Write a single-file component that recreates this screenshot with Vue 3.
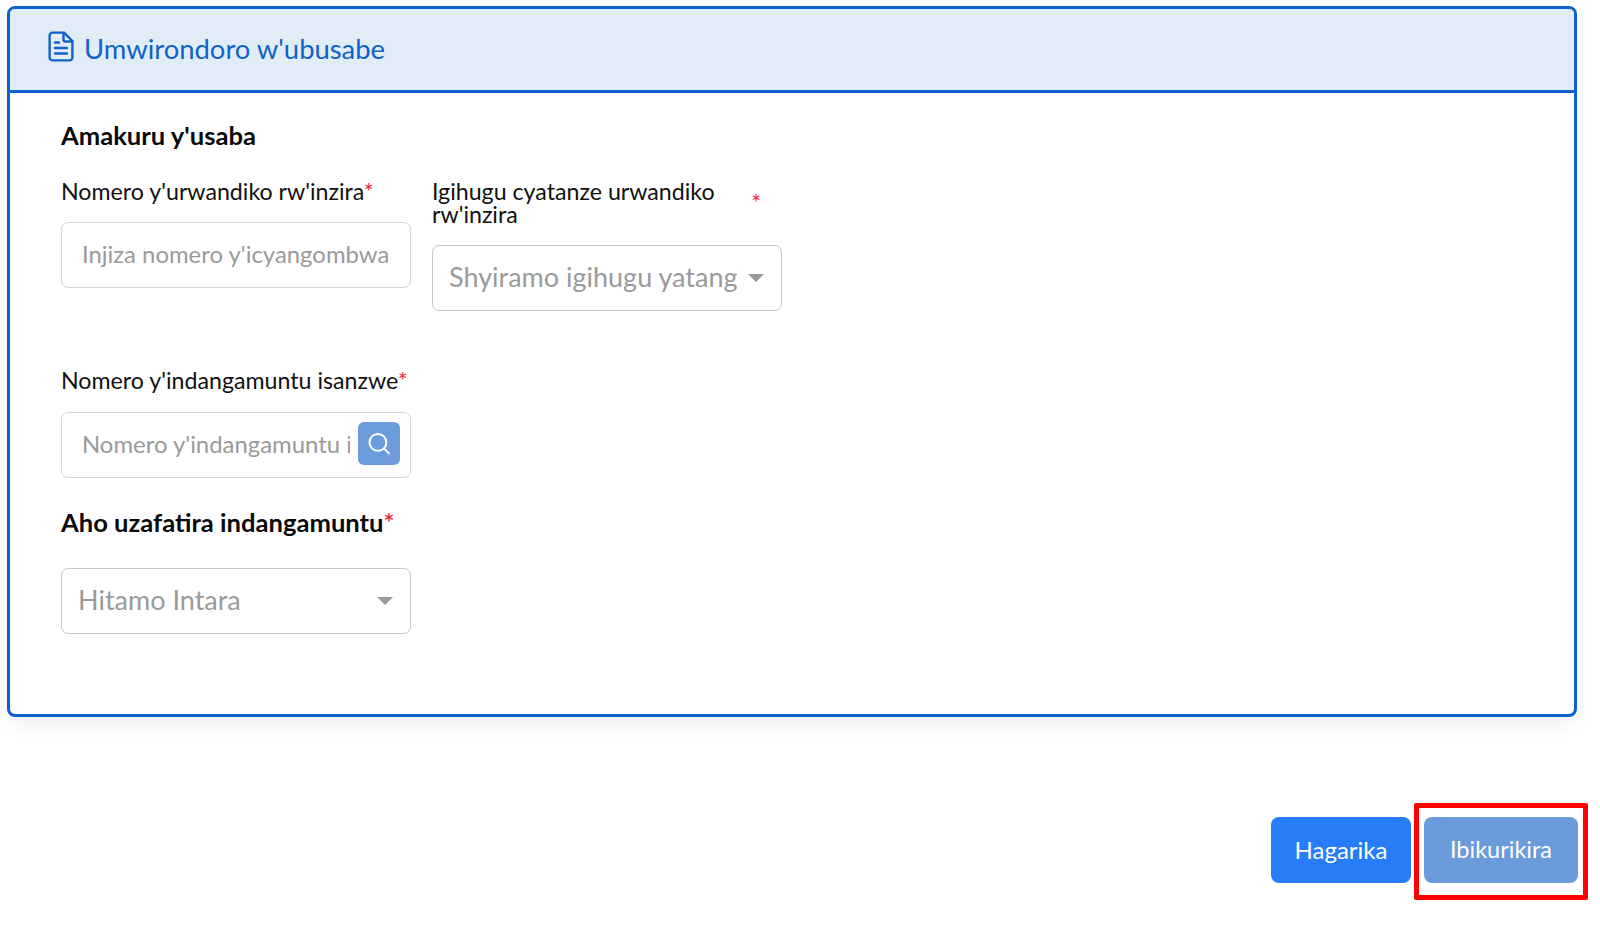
<script setup>
const title = "Umwirondoro w'ubusabe";
</script>

<template>
  <main class="page">
    <section class="card">
      <header class="card-head">
        <svg class="doc" width="26" height="31" viewBox="0 0 26 31" fill="none" stroke="#0f62c9" stroke-width="2.4" stroke-linecap="round" stroke-linejoin="round">
          <path d="M4 1.6h12l8.400 8.400v16.400a3 3 0 0 1-3 3H4.600a3 3 0 0 1-3-3V4.600a3 3 0 0 1 3-3z" />
          <path d="M15.500 2v6.500a2 2 0 0 0 2 2h6.500" />
          <path d="M7 11.500h4M7 17h12M7 22.500h12" />
        </svg>
        <span class="head-text">{{ title }}</span>
      </header>
      <div class="card-body">
        <h2 class="section">Amakuru y'usaba</h2>
        <div class="row">
          <div class="field first">
            <label class="lbl">Nomero y'urwandiko rw'inzira<em>*</em></label>
            <div class="box plain"><input class="ph small" placeholder="Injiza nomero y'icyangombwa" /></div>
          </div>
          <div class="field">
            <label class="lbl two"><span>Igihugu cyatanze urwandiko rw'inzira</span><em>*</em></label>
            <div class="box select">
              <input class="ph pick" readonly placeholder="Shyiramo igihugu yatangiwe urwandiko" />
              <i class="caret"></i>
            </div>
          </div>
        </div>
        <div class="field id">
          <label class="lbl">Nomero y'indangamuntu isanzwe<em>*</em></label>
          <div class="box plain search">
            <input class="ph small narrow" placeholder="Nomero y'indangamuntu isanzwe" />
            <button class="sbtn" type="button" aria-label="search">
              <svg width="26" height="26" viewBox="0 0 24 24" fill="none" stroke="#fff" stroke-width="1.800" stroke-linecap="round">
                <circle cx="11" cy="10.500" r="7.800" />
                <path d="M16.800 16.300l4.400 4.400" />
              </svg>
            </button>
          </div>
        </div>
        <div class="field region">
          <label class="lbl bold">Aho uzafatira indangamuntu<em>*</em></label>
          <div class="box select">
            <input class="ph pick" readonly placeholder="Hitamo Intara" />
            <i class="caret"></i>
          </div>
        </div>
      </div>
    </section>
    <footer class="actions">
      <button class="btn cancel" type="button">Hagarika</button>
      <div class="mark"><button class="btn next" type="button">Ibikurikira</button></div>
    </footer>
  </main>
</template>

<style>
html, body { background: #fff; }
</style>

<style scoped>
.page {
  height: 925px;
  box-sizing: border-box;
  padding: 6px 12px 0 7px;
  font-family: "Lato", "Open Sans", sans-serif;
  color: #111;
  overflow: hidden;
}
.card {
  width: 1570px;
  height: 711px;
  box-sizing: border-box;
  border: 3px solid #0f62c9;
  border-radius: 8px;
  box-shadow: 0 8px 20px rgba(0, 0, 0, .06);
  background: #fff;
}
.card-head {
  height: 84px;
  box-sizing: border-box;
  background: #e2ecf7;
  border-bottom: 3px solid #0f62c9;
  border-radius: 5px 5px 0 0;
  display: flex;
  align-items: center;
  padding-left: 38px;
  gap: 10px;
  color: #0f62c9;
  font-size: 27.400px;
}
.head-text { padding-bottom: 2px; }
.doc { flex: none; margin-top: -6px; }
.card-body { padding: 27px 0 0 51px; }
.section {
  margin: 0;
  font-size: 25.600px;
  line-height: 30px;
  font-weight: 700;
  color: #0a0a0a;
}
.row { display: flex; gap: 21px; margin-top: 30px; height: 210px; }
.field { width: 350px; }
.lbl {
  display: block;
  font-size: 23.200px;
  line-height: 23px;
  color: #111;
}
.lbl em { color: #ee2a4a; font-style: normal; }
.lbl.two { display: flex; justify-content: space-between; }
.lbl.two span { width: 300px; }
.lbl.two em { margin: 11px 21px 0 0; }
.first .box { margin-top: 19px; }
.two + .box { margin-top: 19px; }
.box {
  width: 350px;
  height: 66px;
  box-sizing: border-box;
  border: 1.500px solid #d2d7de;
  border-radius: 7px;
  background: #fff;
  display: flex;
  align-items: center;
}
.plain { padding-left: 20px; }
.select {
  border-color: #c8c8c8;
  padding: 0 17px 0 16px;
  justify-content: space-between;
}
.ph {
  border: 0;
  outline: 0;
  padding: 0 0 3px;
  background: transparent;
  font-family: inherit;
  font-size: 27px;
  width: 100%;
  min-width: 0;
}
.ph::placeholder { color: #9a9a9a; opacity: 1; }
.ph.small { font-size: 23.900px; width: 306px; }
.ph.small.narrow { width: 268px; flex: none; }
.pick { width: 290px; flex: none; }
.search { justify-content: space-between; padding-right: 10px; }
.sbtn {
  width: 42px;
  height: 43px;
  flex: none;
  border: 0;
  padding: 0;
  border-radius: 6px;
  background: #6c9cdc;
  display: flex;
  align-items: center;
  justify-content: center;
  margin-top: -3px;
}
.id { margin-top: -21px; }
.id .box { margin-top: 20px; }
.region { margin-top: 29px; }
.lbl.bold { font-size: 25.600px; line-height: 30px; font-weight: 700; color: #0a0a0a; }
.region .box { margin-top: 31px; }
.caret {
  width: 0;
  height: 0;
  flex: none;
  border-left: 8px solid transparent;
  border-right: 8px solid transparent;
  border-top: 8px solid #9a9a9a;
}
.actions {
  display: flex;
  justify-content: flex-end;
  align-items: center;
  margin-top: 86px;
  gap: 3px;
}
.mark {
  box-sizing: border-box;
  width: 174px;
  height: 97px;
  border: 5px solid #f00;
  border-radius: 2px;
  padding-top: 9px;
  padding-left: 5px;
}
.btn {
  height: 66px;
  border: 0;
  border-radius: 8px;
  color: #fff;
  font: 400 24px "Lato", sans-serif;
}
.cancel { width: 140px; background: #267df7; margin-bottom: 3px; padding-bottom: 2px; }
.next { width: 154px; background: #6c9bdb; font-size: 23.500px; padding-bottom: 3px; }
</style>
